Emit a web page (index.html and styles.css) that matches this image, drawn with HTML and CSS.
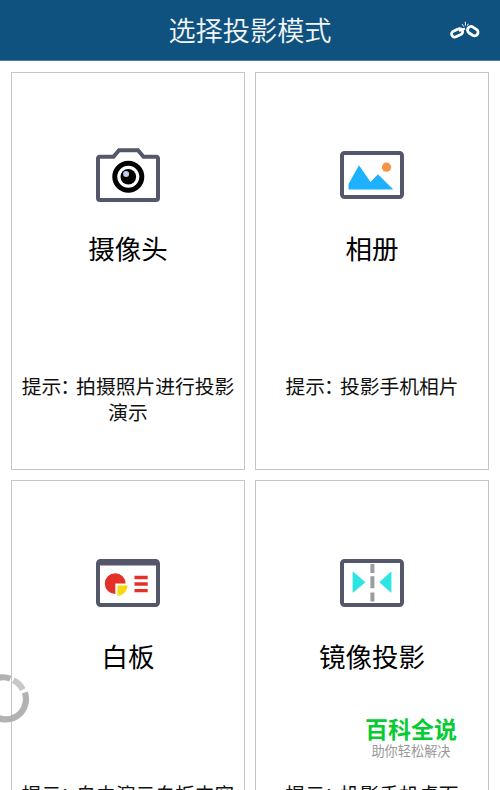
FILE: index.html
```html
<!DOCTYPE html>
<html lang="zh-CN">
<head>
<meta charset="utf-8">
<title>选择投影模式</title>
<link rel="stylesheet" href="styles.css">
</head>
<body>
<header class="bar">
  <h1 class="title">选择投影模式</h1>
  <svg class="link" viewBox="0 0 30 20" fill="none" stroke="#fff">
    <rect x="1.4" y="8.8" width="11.5" height="6.2" rx="3.1" stroke-width="2.8" transform="rotate(-25 7 12)"/>
    <rect x="17.2" y="6.8" width="11.2" height="7" rx="3.5" stroke-width="2.8" transform="rotate(33 23 10.2)"/>
    <path d="M9 10L15 7.5" stroke-width="2.2"/>
    <path d="M12.2 3.2l1.6 2.4M15.4.8v3.8M18.3 2.8l-.9 1.7" stroke-width="1"/>
  </svg>
</header>
<main class="grid">
  <section class="card">
    <svg class="icon" viewBox="0 0 64 56">
      <path d="M4 9.8H17.5L23 3.3H42L47.5 9.8H60Q62 9.8 62 11.8V51Q62 53 60 53H4Q2 53 2 51V11.8Q2 9.8 4 9.8Z" fill="#fff" stroke="#545769" stroke-width="4"/>
      <circle cx="32.3" cy="29.7" r="13.5" fill="#fff" stroke="#000" stroke-width="5"/>
      <circle cx="32.3" cy="29.7" r="7.8"/>
      <circle cx="30.1" cy="27" r="3" fill="#c5cbed"/>
    </svg>
    <h2 class="name">摄像头</h2>
    <p class="hint">提示<span class="colon">：</span>拍摄照片进行投影演示</p>
  </section>
  <section class="card">
    <svg class="icon" viewBox="0 0 64 56">
      <rect x="2" y="6" width="60" height="44" rx="2.5" fill="#fff" stroke="#545769" stroke-width="4"/>
      <path d="M8.5 42.5V37L19 18.2L30.5 35L38 27.2L53.3 42.5Z" fill="#1eb1ff"/>
      <circle cx="46.5" cy="20.2" r="4.6" fill="#f79246"/>
    </svg>
    <h2 class="name">相册</h2>
    <p class="hint">提示<span class="colon">：</span>投影手机相片</p>
  </section>
  <section class="card">
    <svg class="icon" viewBox="0 0 64 56">
      <rect x="2" y="6" width="60" height="44" rx="2.5" fill="#fff" stroke="#545769" stroke-width="4"/>
      <path d="M2 6H62V10.5H2Z" fill="#545769"/>
      <path d="M19.3 28.6H29.6A10.4 10.4 0 1 0 19.3 39Z" fill="#e43027"/>
      <path d="M21.5 30.6H31.7A10.7 10.7 0 0 1 21.5 41Z" fill="#f5d80d"/>
      <path d="M38.5 22.5H51.7M38.5 29H51.7M38.5 35.6H51.7" stroke="#e43027" stroke-width="3.4"/>
    </svg>
    <h2 class="name">白板</h2>
    <p class="hint">提示<span class="colon">：</span>自由演示白板内容</p>
  </section>
  <section class="card">
    <svg class="icon" viewBox="0 0 64 56">
      <rect x="2" y="6" width="60" height="44" rx="2.5" fill="#fff" stroke="#545769" stroke-width="4"/>
      <path d="M32.4 9V18M32.4 21.2V33.3M32.4 37.4V46.4" stroke="#9b9ba0" stroke-width="4"/>
      <path d="M13 17L25 27.2L13 37.3ZM51 17L39.8 27.2L51 37.3Z" fill="#2ce5e3" stroke="#2ce5e3" stroke-width=".8" stroke-linejoin="round"/>
    </svg>
    <h2 class="name">镜像投影</h2>
    <p class="hint">提示<span class="colon">：</span>投影手机桌面</p>
  </section>
</main>
<svg class="spinner" viewBox="0 0 32 52">
  <path d="M-12 14A20.2 20.2 0 0 1 11.3 7.7M25.8 21.5A20.2 20.2 0 0 1-7 43" fill="none" stroke="#aaa" stroke-opacity=".9" stroke-width="6.2"/>
  <path d="M14.3 9.3A20.2 20.2 0 0 1 23.8 18.7" fill="none" stroke="#c8c8c8" stroke-width="6.2"/>
</svg>
<div class="mark">
  <div class="mark-name">百科全说</div>
  <div class="mark-sub">助你轻松解决</div>
</div>
</body>
</html>
```
FILE: styles.css
```css
* { box-sizing: border-box; }
body {
  margin: 0;
  height: 790px;
  overflow: hidden;
  position: relative;
  background: #fff;
  color: #111;
  font-family: "Noto Sans CJK SC", sans-serif;
}
h1, h2, p { margin: 0; font-weight: 400; }
.bar {
  position: relative;
  display: flex;
  justify-content: center;
  align-items: center;
  height: 61px;
  padding-bottom: 2px;
  background: #10527f;
  border-bottom: 1px solid #4b7fa2;
}
.title {
  color: #f2f6f9;
  font-size: 27.2px;
  font-weight: 350;
  line-height: 40px;
}
.link {
  position: absolute;
  left: 450px;
  top: 21px;
  width: 30px;
  height: 20px;
}
.grid {
  display: grid;
  grid-template-columns: 234px 234px;
  grid-auto-rows: 398px;
  gap: 10px;
  height: 729px;
  overflow: hidden;
  padding: 11px 11px 0;
}
.card {
  display: flex;
  flex-direction: column;
  align-items: center;
  padding: 74px 7px 0;
  border: 1px solid #c4c4c4;
}
.icon {
  display: block;
  width: 64px;
  height: 56px;
  flex: none;
}
.name {
  margin-top: 25px;
  font-size: 26.5px;
  line-height: 40px;
  color: #000;
}
.hint {
  margin-top: 105px;
  font-size: 19.8px;
  line-height: 26px;
  text-align: center;
}
.colon {
  margin: 0 6px 0 -1px;
  font-feature-settings: "halt";
}
.spinner {
  position: absolute;
  left: -1px;
  top: 671px;
  width: 32px;
  height: 52px;
}
.mark {
  position: absolute;
  left: 364px;
  top: 713px;
  width: 94px;
  text-align: center;
  white-space: nowrap;
}
.mark-name {
  color: #06cb32;
  font-size: 23px;
  font-weight: 700;
  line-height: 31px;
}
.mark-sub {
  color: #999;
  font-size: 13.2px;
  line-height: 14px;
}
```
